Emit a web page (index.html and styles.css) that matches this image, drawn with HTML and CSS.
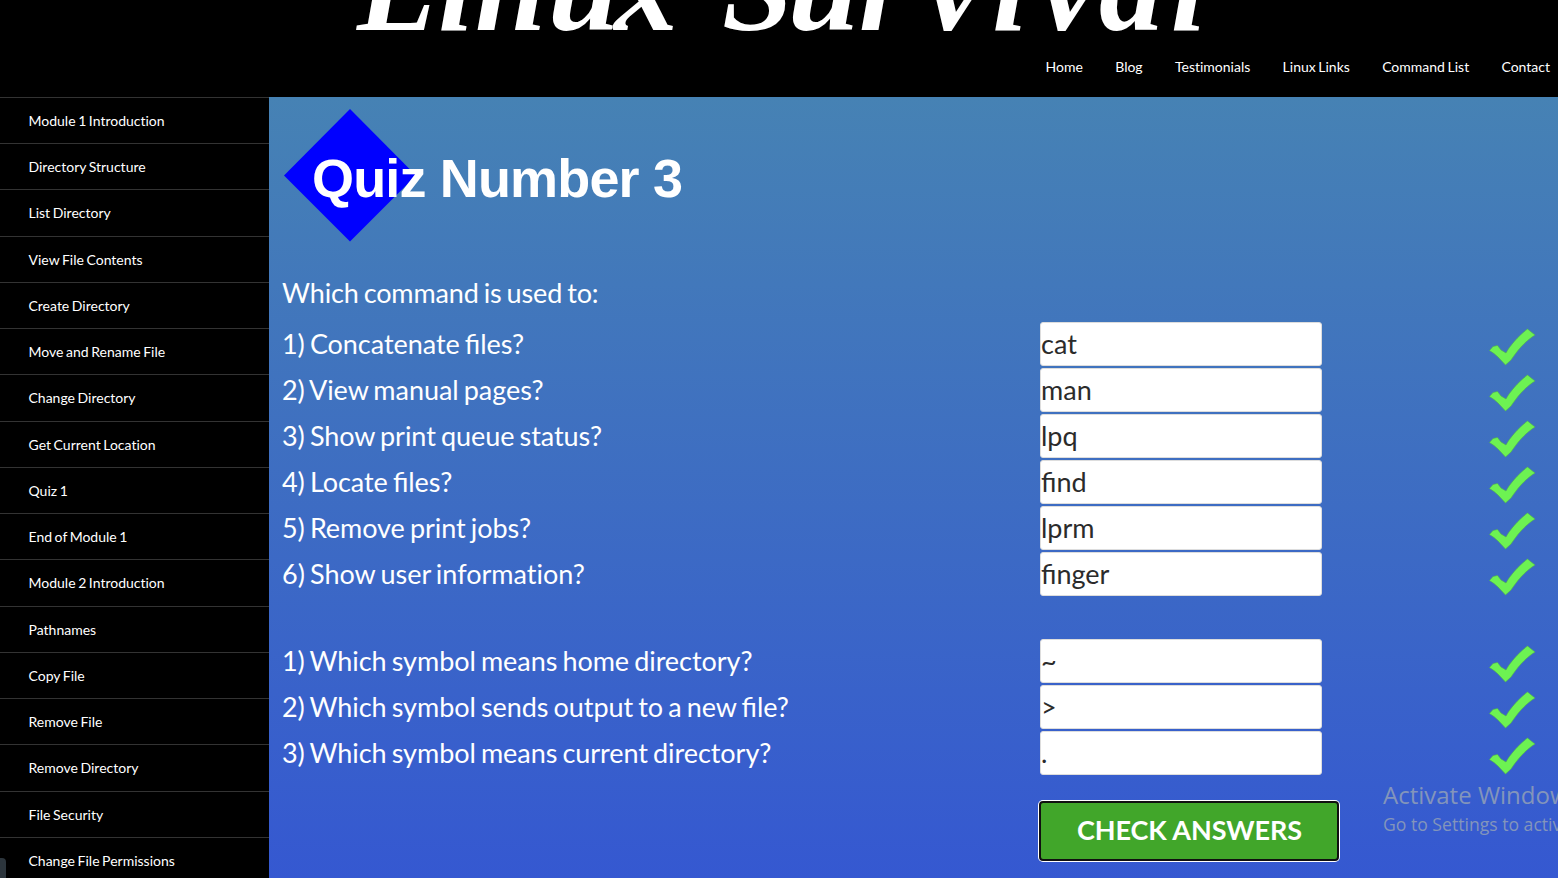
FILE: index.html
```
<!DOCTYPE html>
<html lang="en">
<head>
<meta charset="utf-8">
<title>Quiz 3 - Linux Survival</title>
<link rel="stylesheet" href="styles.css">
</head>
<body>
<header class="site-header">
  <svg class="brand" width="1558" height="44" viewBox="0 0 1558 44"><text class="brand-text" y="30" x="357 438 475 548 614 650 722 788 859 926 992 1040 1099 1171">Linux Survival</text></svg>
  <nav class="top-nav"><a>Home</a><a>Blog</a><a>Testimonials</a><a>Linux Links</a><a>Command List</a><a>Contact</a></nav>
</header>
<div class="layout">
  <aside class="sidebar">
    <a>Module 1 Introduction</a><a>Directory Structure</a><a>List Directory</a><a>View File Contents</a><a>Create Directory</a><a>Move and Rename File</a><a>Change Directory</a><a>Get Current Location</a><a>Quiz 1</a><a>End of Module 1</a><a>Module 2 Introduction</a><a>Pathnames</a><a>Copy File</a><a>Remove File</a><a>Remove Directory</a><a>File Security</a><a>Change File Permissions</a>
  </aside>
  <main class="content">
    <svg class="quiz-logo" width="410" height="136" viewBox="0 0 410 136">
      <path d="M0 68.500 66 2 132 68.500 66 134.500Z" fill="#00f"/>
      <text class="quiz-title" x="29" y="90" textLength="371">Quiz Number 3</text>
    </svg>
    <p class="prompt">Which command is used to:</p>
    <div class="group">
      <div class="row"><label>1) Concatenate files?</label><input value="cat"><svg class="tick" viewBox="0 0 48 38"><use href="#tick"/></svg></div>
      <div class="row"><label>2) View manual pages?</label><input value="man"><svg class="tick" viewBox="0 0 48 38"><use href="#tick"/></svg></div>
      <div class="row"><label>3) Show print queue status?</label><input value="lpq"><svg class="tick" viewBox="0 0 48 38"><use href="#tick"/></svg></div>
      <div class="row"><label>4) Locate files?</label><input value="find"><svg class="tick" viewBox="0 0 48 38"><use href="#tick"/></svg></div>
      <div class="row"><label>5) Remove print jobs?</label><input value="lprm"><svg class="tick" viewBox="0 0 48 38"><use href="#tick"/></svg></div>
      <div class="row"><label class="plain">6) Show user information?</label><input value="finger"><svg class="tick" viewBox="0 0 48 38"><use href="#tick"/></svg></div>
    </div>
    <div class="group">
      <div class="row"><label>1) Which symbol means home directory?</label><input value="~"><svg class="tick" viewBox="0 0 48 38"><use href="#tick"/></svg></div>
      <div class="row"><label>2) Which symbol sends output to a new file?</label><input value="&gt;"><svg class="tick" viewBox="0 0 48 38"><use href="#tick"/></svg></div>
      <div class="row"><label>3) Which symbol means current directory?</label><input value="."><svg class="tick" viewBox="0 0 48 38"><use href="#tick"/></svg></div>
    </div>
    <button class="check">CHECK ANSWERS</button>
  </main>
</div>
<div class="status-corner"></div>
<div class="watermark"><div class="wm-title">Activate Windows</div><div class="wm-sub">Go to Settings to activate Windows.</div></div>
<svg width="0" height="0" class="defs"><defs>
  <path id="tick" d="M0.500 22.500 4 18.500 8.500 17.500 12 22 17 25C20 19 29 8 38.500 1L41 3 46 7C35 14 28 23 22 32L16.500 37 9 29 5 25.500Z" fill="#6df252" stroke="#51b04c" stroke-width=".6"/>
</defs></svg>
</body>
</html>
```
FILE: styles.css
```
* { box-sizing: border-box; }
body { margin: 0; width: 1558px; height: 878px; overflow: hidden; background: #000; color: #fff; font-family: Lato, sans-serif; position: relative; }
.site-header { height: 97px; display: flex; flex-direction: column; background: #000; }
.brand { display: block; overflow: hidden; flex: none; }
.brand-text { font: italic bold 128px "Liberation Serif", serif; fill: #fff; }
.top-nav { display: flex; justify-content: flex-end; gap: 32.300px; padding: 13px 8px 0 0; font-size: 14px; line-height: 20px; white-space: nowrap; word-spacing: -1px; font-variant-ligatures: none; }
.layout { display: flex; height: 781px; }
.sidebar { width: 269px; flex: none; margin-top: -.25px; overflow: hidden; }
.sidebar a { display: block; height: 46.25px; border-top: 1px solid #333; padding-left: 28.500px; font-size: 14px; line-height: 45.200px; white-space: nowrap; word-spacing: -1px; font-variant-ligatures: none; }
.content { flex: 1; padding: 10px 0 0 13px; background: linear-gradient(#4682b4, #3558d1); font-size: 27px; }
.quiz-logo { display: block; margin-left: 2px; }
.quiz-title { font: bold 54px "Liberation Sans", sans-serif; fill: #fff; transform: translateX(-1px); }
.prompt { margin: 28px 0 0; height: 51px; line-height: 44px; letter-spacing: -.13px; word-spacing: -1.800px; }
.group { margin-bottom: 41px; }
.row { height: 46px; display: grid; grid-template-columns: 758px 449px 48px; align-items: start; }
.row label { line-height: 44px; white-space: nowrap; letter-spacing: -.05px; word-spacing: -1.750px; font-feature-settings: "liga" 1; }
.row .plain { font-feature-settings: "liga" 0; letter-spacing: 0; }
.row input { width: 282px; height: 44px; border: 1px solid #ddd; border-radius: 3px; padding: 0 0 1px; background: #fff; color: #2b2b2b; font: 27px Lato, sans-serif; }
.tick { width: 48px; height: 38px; margin-top: 6px; }
.check { display: block; width: 300px; height: 60px; margin: -17px 0 0 757px; padding: 0 0 4px 1px; border: 2px solid #101010; border-radius: 4px; background: #41a62a; color: #fff; font: bold 27px Lato, sans-serif; letter-spacing: -.1px; box-shadow: 0 0 0 1px #fff; outline: 0; }
.watermark { position: absolute; left: 1383px; top: 780px; width: 175px; overflow: hidden; white-space: nowrap; color: #8395bb; font-family: "Open Sans", sans-serif; }
.wm-title { font-size: 24px; line-height: 30px; }
.wm-sub { font-size: 17.600px; line-height: 28px; }
.status-corner { position: absolute; left: 0; top: 858px; width: 6px; height: 20px; border-radius: 0 4px 0 0; background: #2c353c; }
.defs { position: absolute; }
```
